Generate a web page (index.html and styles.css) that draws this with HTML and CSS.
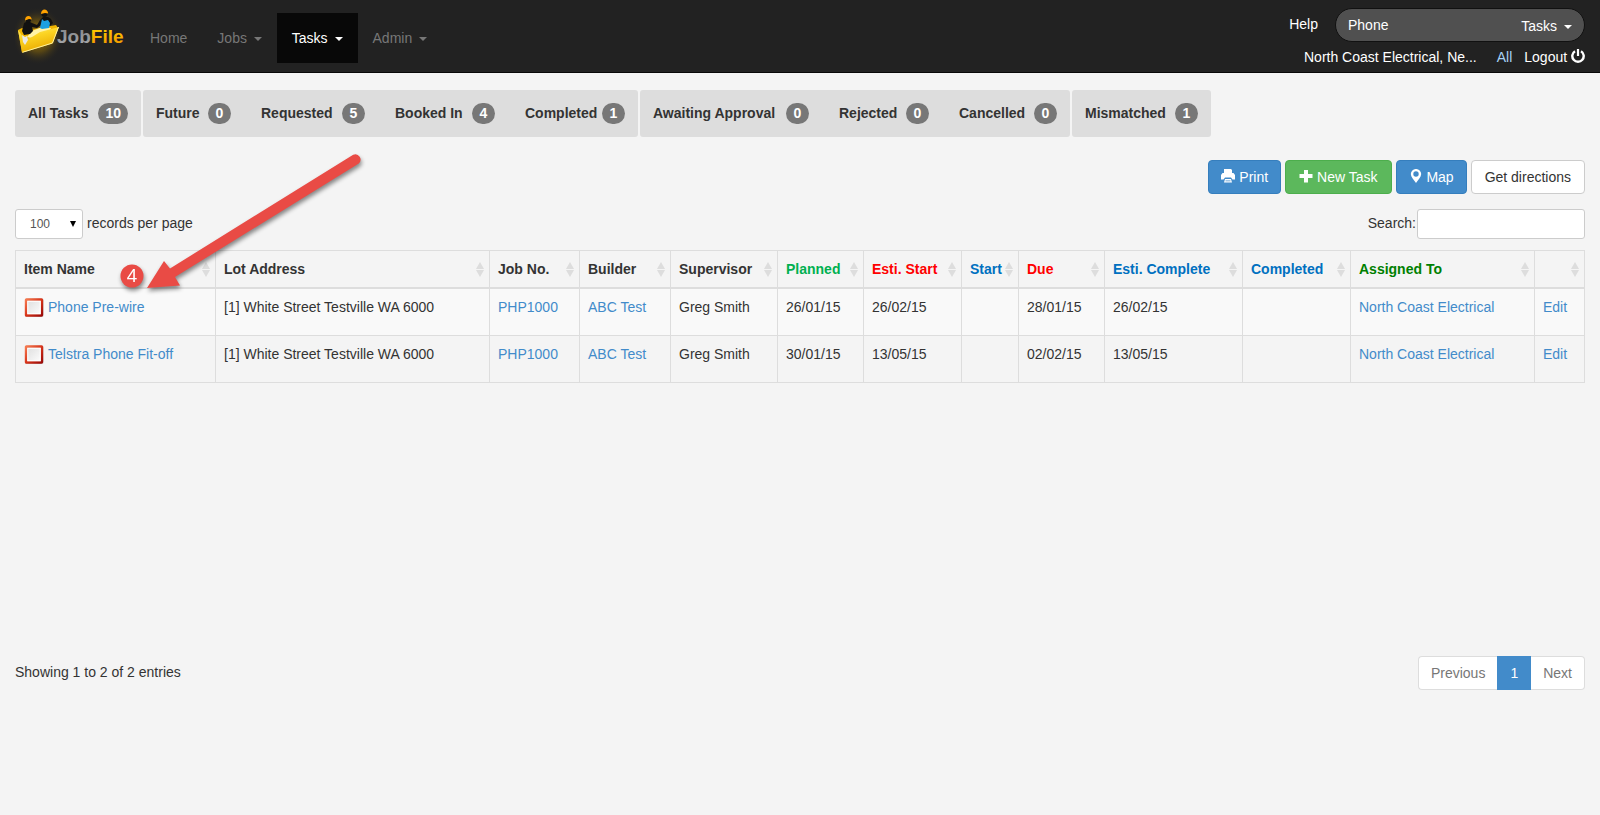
FILE: index.html
```html
<!DOCTYPE html>
<html lang="en">
<head>
<meta charset="utf-8">
<title>JobFile - Tasks</title>
<link rel="stylesheet" href="styles.css">
</head>
<body>
<svg class="defs" aria-hidden="true">
  <defs>
    <linearGradient id="box-edge" x1="0" y1="0" x2="1" y2="1">
      <stop offset="0" stop-color="#f5794f"/><stop offset="0.5" stop-color="#d8341a"/><stop offset="1" stop-color="#9c0a08"/>
    </linearGradient>
    <linearGradient id="box-fill" x1="0" y1="0" x2="1" y2="1">
      <stop offset="0" stop-color="#dcdcdc"/><stop offset="1" stop-color="#fff"/>
    </linearGradient>
    <symbol id="sort" viewBox="0 0 8 15">
      <path d="M4 0 8 7H0zM0 8h8l-4 7z" fill="#ddd"/>
    </symbol>
    <symbol id="status" viewBox="0 0 20 20">
      <rect x="1" y="1.500" width="18.500" height="18.500" rx="1.500" fill="#ccc"/>
      <rect x="2" y="2.500" width="16" height="16" rx="0.500" fill="url(#box-fill)" stroke="url(#box-edge)" stroke-width="2.400"/>
      <rect x="3.800" y="4.300" width="12.400" height="12.400" fill="none" stroke="#fff"/>
    </symbol>
  </defs>
</svg>

<header class="navbar">
  <a class="brand" href="#" aria-label="JobFile">
    <svg class="logo" viewBox="0 0 120 72" aria-hidden="true">
      <defs>
        <radialGradient id="glow"><stop offset="0" stop-color="#d9a406" stop-opacity="0.9"/><stop offset="0.55" stop-color="#8a6808" stop-opacity="0.5"/><stop offset="1" stop-color="#222" stop-opacity="0"/></radialGradient>
        <linearGradient id="folder" x1="0" y1="0" x2="0.4" y2="1"><stop offset="0" stop-color="#fff27a"/><stop offset="0.45" stop-color="#fbd322"/><stop offset="1" stop-color="#e9a900"/></linearGradient>
        <linearGradient id="silver" x1="0" y1="0" x2="0" y2="1"><stop offset="0" stop-color="#808285"/><stop offset="1" stop-color="#aaacaf"/></linearGradient>
        <linearGradient id="gold" x1="0" y1="0" x2="0" y2="1"><stop offset="0" stop-color="#ffd400"/><stop offset="1" stop-color="#f29100"/></linearGradient>
      </defs>
      <ellipse cx="23" cy="36" rx="26" ry="29" fill="url(#glow)"/>
      <path d="M3 30l4-2 8 2 26-5 2 3-6 15-30 9z" fill="#f0b400"/>
      <path d="M12 37l5-6 10-4 9 1-3 5-17 5z" fill="#fff3a8"/>
      <path d="M9 23l4-2 4 2 5 2 3-2 1 2-4 3-5-1 1 4-3 3-6 1-2-4z" fill="#111"/>
      <path d="M25 20l3-3h5l3 2 2 4-3 3-2-5-6 1-3 4-3 1z" fill="#111"/>
      <path d="M27 19l2 2 4-1 2 3-1 5-7 1-2-1z" fill="#1ba0e2"/>
      <circle cx="13.300" cy="19.800" r="2.800" fill="#111"/>
      <circle cx="29.500" cy="14" r="3" fill="#111"/>
      <path d="M10 20.500c-.2-5.500 6.200-6 6.800-1l-2.800-.4z" fill="#ffa200"/>
      <path d="M26 14c0-6 6.600-6 7.200-.5l-3.200-.5z" fill="#ffa200"/>
      <path d="M3 30l5 7 4 2 5-2 8-5 19-5-6.500 16.500L7 52.700z" fill="url(#folder)"/>
      <path d="M7 35l3 2 2-1 1 4-3 5-2-3z" fill="#e8e8e8"/>
      <path d="M7.500 52.300l30-9.300L43.500 27" fill="none" stroke="#fff3a0"/>
      <text class="logo-text" x="42" y="43" fill="url(#silver)">Job<tspan fill="url(#gold)">File</tspan></text>
    </svg>
  </a>
  <nav class="menu" aria-label="Main">
    <a class="menu-link" href="#">Home</a>
    <a class="menu-link" href="#">Jobs <i class="caret"></i></a>
    <a class="menu-link active" href="#">Tasks <i class="caret"></i></a>
    <a class="menu-link" href="#">Admin <i class="caret"></i></a>
  </nav>
  <div class="account">
    <div class="account-row">
      <a class="help" href="#">Help</a>
      <form class="quick-search">
        <input class="quick-input" type="text" value="Phone" aria-label="Quick search">
        <button class="quick-scope" type="button">Tasks <i class="caret"></i></button>
      </form>
    </div>
    <div class="account-row account-info">
      <a class="company" href="#">North Coast Electrical, Ne...</a>
      <a class="all" href="#">All</a>
      <a class="logout" href="#">Logout
        <svg class="icon" viewBox="0 0 14 14" aria-hidden="true"><path d="M4 2.200a5.700 5.700 0 1 0 6 0" fill="none" stroke="#fff" stroke-width="2.400"/><path d="M5.900 0h2.200v7H5.900z" fill="#fff"/></svg></a>
    </div>
  </div>
</header>

<main class="page">
  <div class="filters">
    <div class="filter-group only-all">
      <button class="filter" type="button">All Tasks <span class="badge">10</span></button>
    </div>
    <div class="filter-group progress">
      <button class="filter" type="button">Future <span class="badge">0</span></button>
      <button class="filter" type="button">Requested <span class="badge">5</span></button>
      <button class="filter" type="button">Booked In <span class="badge">4</span></button>
      <button class="filter" type="button">Completed <span class="badge">1</span></button>
    </div>
    <div class="filter-group review">
      <button class="filter" type="button">Awaiting Approval <span class="badge">0</span></button>
      <button class="filter" type="button">Rejected <span class="badge">0</span></button>
      <button class="filter" type="button">Cancelled <span class="badge">0</span></button>
    </div>
    <div class="filter-group mismatch">
      <button class="filter" type="button">Mismatched <span class="badge">1</span></button>
    </div>
  </div>

  <div class="actions">
    <button class="btn primary" type="button"><svg class="icon" viewBox="0 0 14 14" aria-hidden="true"><path fill="#fff" fill-rule="evenodd" d="M3 0h7l1 1v3h1.500L14 6v4.500h-2.500L10 8.500H4L2.500 10.500H0V6l1.500-2H3zM4 10h6l1 3.500H3zM4.500 11.500h5v.8h-5z"/></svg> Print</button>
    <button class="btn success" type="button"><svg class="icon" viewBox="0 0 14 14" aria-hidden="true"><path fill="#fff" d="M5 1h4v4h4.500v4H9v4.500H5V9H.5V5H5z"/></svg> New Task</button>
    <button class="btn primary" type="button"><svg class="icon" viewBox="0 0 14 14" aria-hidden="true"><path fill="#fff" fill-rule="evenodd" d="M7 0a5 5 0 0 1 5.200 5C12.200 8 9 11 7 14 5 11 1.800 8 1.800 5A5 5 0 0 1 7 0zm0 2.300a2.700 2.700 0 1 0 0 5.400 2.700 2.700 0 0 0 0-5.400z"/></svg> Map</button>
    <button class="btn" type="button">Get directions</button>
  </div>

  <div class="table-tools">
    <div class="tool">
      <span class="select-wrap"><select class="field length" id="length"><option>100</option></select></span>
      <label for="length">records per page</label>
    </div>
    <div class="tool search">
      <label for="search">Search:</label>
      <input class="field search-field" type="text" id="search">
    </div>
  </div>

  <div class="table-area">
    <table class="tasks">
      <colgroup>
        <col class="c-name"><col class="c-address"><col class="c-job"><col class="c-builder"><col class="c-super"><col class="c-date"><col class="c-estart"><col class="c-start"><col class="c-date"><col class="c-ecomplete"><col class="c-completed"><col class="c-assigned"><col class="c-edit">
      </colgroup>
      <thead>
        <tr>
          <th><div class="head">Item Name<svg class="sort"><use href="#sort"/></svg></div></th>
          <th><div class="head">Lot Address<svg class="sort"><use href="#sort"/></svg></div></th>
          <th><div class="head">Job No.<svg class="sort"><use href="#sort"/></svg></div></th>
          <th><div class="head">Builder<svg class="sort"><use href="#sort"/></svg></div></th>
          <th><div class="head">Supervisor<svg class="sort"><use href="#sort"/></svg></div></th>
          <th><div class="head planned">Planned<svg class="sort"><use href="#sort"/></svg></div></th>
          <th><div class="head red">Esti. Start<svg class="sort"><use href="#sort"/></svg></div></th>
          <th><div class="head blue">Start<svg class="sort"><use href="#sort"/></svg></div></th>
          <th><div class="head red">Due<svg class="sort"><use href="#sort"/></svg></div></th>
          <th><div class="head blue">Esti. Complete<svg class="sort"><use href="#sort"/></svg></div></th>
          <th><div class="head blue">Completed<svg class="sort"><use href="#sort"/></svg></div></th>
          <th><div class="head green">Assigned To<svg class="sort"><use href="#sort"/></svg></div></th>
          <th><div class="head"><span></span><svg class="sort"><use href="#sort"/></svg></div></th>
        </tr>
      </thead>
      <tbody>
        <tr>
          <td><div class="item"><svg class="status"><use href="#status"/></svg><a href="#">Phone Pre-wire</a></div></td>
          <td>[1] White Street Testville WA 6000</td>
          <td><a href="#">PHP1000</a></td>
          <td><a href="#">ABC Test</a></td>
          <td>Greg Smith</td>
          <td>26/01/15</td>
          <td>26/02/15</td>
          <td></td>
          <td>28/01/15</td>
          <td>26/02/15</td>
          <td></td>
          <td><a href="#">North Coast Electrical</a></td>
          <td><a href="#">Edit</a></td>
        </tr>
        <tr>
          <td><div class="item"><svg class="status"><use href="#status"/></svg><a href="#">Telstra Phone Fit-off</a></div></td>
          <td>[1] White Street Testville WA 6000</td>
          <td><a href="#">PHP1000</a></td>
          <td><a href="#">ABC Test</a></td>
          <td>Greg Smith</td>
          <td>30/01/15</td>
          <td>13/05/15</td>
          <td></td>
          <td>02/02/15</td>
          <td>13/05/15</td>
          <td></td>
          <td><a href="#">North Coast Electrical</a></td>
          <td><a href="#">Edit</a></td>
        </tr>
      </tbody>
    </table>
  </div>

  <div class="table-foot">
    <div class="summary">Showing 1 to 2 of 2 entries</div>
    <nav class="pagination" aria-label="Pages">
      <button class="page-btn" type="button">Previous</button>
      <button class="page-btn current" type="button">1</button>
      <button class="page-btn" type="button">Next</button>
    </nav>
  </div>
</main>

<svg class="callout" viewBox="0 0 260 160" aria-hidden="true">
  <g fill="#e94b45">
    <path d="M37 148 54 121 60 128.500 243.200 14.700A5.300 5.300 0 0 1 248.800 23.500L65 137 70 145.500z"/>
    <circle cx="22" cy="136" r="11.500"/>
  </g>
  <text class="callout-text" x="22" y="142" text-anchor="middle">4</text>
</svg>
</body>
</html>
```
FILE: styles.css
```css
* { box-sizing: border-box; }

body {
  margin: 0;
  background: #f4f4f4;
  color: #333;
  font: 14px/20px "Liberation Sans", Arial, sans-serif;
}

a { color: #428bca; text-decoration: none; }
button, input, select { font: inherit; color: inherit; }
.defs { position: absolute; width: 0; height: 0; }
.icon { width: 14px; height: 14px; vertical-align: -1px; }

.caret {
  display: inline-block;
  margin-left: 3px;
  border: 4px solid transparent;
  border-top-color: currentColor;
  border-bottom: 0;
  vertical-align: middle;
}

/* Top bar */
.navbar {
  display: flex;
  padding: 0 15px;
  background: #222;
  border-bottom: 1px solid #080808;
}
.brand { display: flex; }
.logo { width: 120px; height: 72px; }
.logo-text { font: bold 19px "Liberation Sans", Arial, sans-serif; }
.menu { display: flex; align-self: center; padding-top: 4px; }
.menu-link { padding: 15px; color: #777; white-space: nowrap; }
.menu-link.active { background: #080808; color: #fff; }

.account { margin-left: auto; padding-top: 8px; }
.account-row { display: flex; align-items: center; justify-content: flex-end; gap: 17px; }
.account-row a { color: #fff; white-space: nowrap; }
.account-row .help { padding-bottom: 2px; }
.account-info { padding-top: 5px; gap: 12px; }
.account-row .company { padding-right: 8px; }
.account-row .all { color: #a6d1f5; }
.quick-search {
  display: flex;
  width: 250px;
  height: 34px;
  background: #505050;
  border: 1px solid #111;
  border-radius: 17px;
}
.quick-input { flex: 1; min-width: 0; padding: 0 12px; border: 0; background: none; color: #fff; }
.quick-scope { padding: 2px 12px 0 0; border: 0; background: none; color: #fff; }

/* Filters */
.page { padding: 17px 15px; }
.filters { display: flex; flex-wrap: wrap; gap: 2px; }
.filter-group { display: grid; gap: 4px; background: #ddd; border-radius: 3px; }
.only-all { grid-template-columns: 126px; }
.progress { grid-template-columns: 101px 130px 126px 126px; }
.review { grid-template-columns: 182px 116px 124px; }
.mismatch { grid-template-columns: 139px; }
.filter {
  display: flex;
  align-items: center;
  justify-content: space-between;
  height: 47px;
  padding: 0 13px 1px;
  border: 0;
  background: none;
  font-weight: bold;
  white-space: nowrap;
}
.badge {
  min-width: 23px;
  padding: 0 7px;
  border-radius: 11px;
  background: #777;
  color: #fff;
  line-height: 21px;
  text-align: center;
}

/* Buttons */
.actions { display: flex; justify-content: flex-end; gap: 4px; padding-top: 23px; }
.btn {
  height: 34px;
  padding: 0 13px;
  background: #fff;
  border: 1px solid #ccc;
  border-radius: 4px;
  white-space: nowrap;
}
.primary { padding: 0 12px; background: #428bca; border-color: #357ebd; color: #fff; }
.success { background: #5cb85c; border-color: #4cae4c; color: #fff; }

/* Table tools */
.table-tools { display: flex; justify-content: space-between; padding: 15px 0 11px; }
.tool { display: flex; align-items: center; gap: 4px; }
.tool label { padding-bottom: 2px; }
.search { gap: 1px; }
.field { height: 30px; background: #fff; border: 1px solid #ccc; border-radius: 3px; font-size: 12px; color: #555; }
.select-wrap { position: relative; }
.select-wrap::after {
  content: "";
  position: absolute;
  top: 12px;
  right: 7px;
  border: 3px solid transparent;
  border-top: 6px solid #000;
  border-bottom: 0;
}
.length { display: block; width: 68px; padding: 0 14px; appearance: none; }
.search-field { width: 168px; padding: 5px 10px; }

/* Task table */
.table-area { min-height: 406px; }
.tasks { width: 100%; table-layout: fixed; border-collapse: collapse; }
.tasks th, .tasks td { border: 1px solid #ddd; padding: 8px; text-align: left; vertical-align: top; white-space: nowrap; }
.tasks th { padding-right: 5px; border-bottom-width: 2px; }
.tasks td { height: 47px; }
.tasks tbody tr:nth-child(odd) { background: #f9f9f9; }
.head { display: flex; align-items: center; justify-content: space-between; min-height: 20px; }
.sort { flex: none; width: 8px; height: 15px; }
.item { display: flex; gap: 4px; }
.status { width: 20px; height: 20px; }
.planned { color: #00b050; }
.red { color: #f00; }
.blue { color: #0070c0; }
.green { color: #008000; }
.c-name { width: 200px; }
.c-address { width: 274px; }
.c-job { width: 90px; }
.c-builder { width: 91px; }
.c-super { width: 107px; }
.c-date { width: 86px; }
.c-estart { width: 98px; }
.c-start { width: 57px; }
.c-ecomplete { width: 138px; }
.c-completed { width: 108px; }
.c-assigned { width: 184px; }
.c-edit { width: 50px; }

/* Footer */
.table-foot { display: flex; align-items: center; justify-content: space-between; }
.summary { padding-bottom: 2px; }
.pagination { display: flex; }
.page-btn { height: 34px; padding: 0 12px; background: #fff; border: 1px solid #ddd; color: #777; }
.page-btn:first-child { border-right: 0; border-radius: 4px 0 0 4px; }
.page-btn:last-child { border-left: 0; border-radius: 0 4px 4px 0; }
.page-btn.current { background: #428bca; border-color: #428bca; color: #fff; }

/* Annotation over the table */
.callout {
  position: absolute;
  left: 110px;
  top: 140px;
  width: 260px;
  height: 160px;
  pointer-events: none;
  filter: drop-shadow(1px 3px 2px rgba(0, 0, 0, 0.45));
}
.callout-text { font: 18px "Noto Sans", sans-serif; fill: #fff; }
```
